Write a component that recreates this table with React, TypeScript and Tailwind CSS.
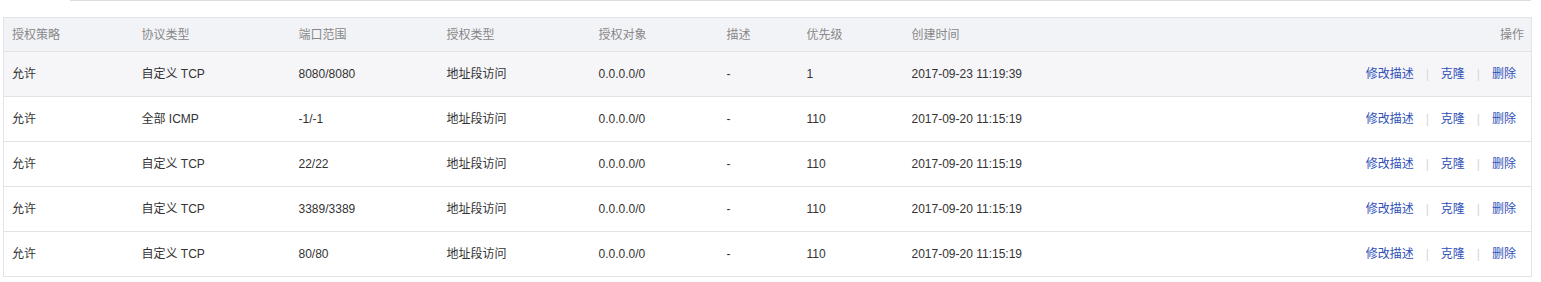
const rows = [
  { policy: "允许", proto: "自定义 TCP", port: "8080/8080", type: "地址段访问", target: "0.0.0.0/0", desc: "-", prio: "1", time: "2017-09-23 11:19:39" },
  { policy: "允许", proto: "全部 ICMP", port: "-1/-1", type: "地址段访问", target: "0.0.0.0/0", desc: "-", prio: "110", time: "2017-09-20 11:15:19" },
  { policy: "允许", proto: "自定义 TCP", port: "22/22", type: "地址段访问", target: "0.0.0.0/0", desc: "-", prio: "110", time: "2017-09-20 11:15:19" },
  { policy: "允许", proto: "自定义 TCP", port: "3389/3389", type: "地址段访问", target: "0.0.0.0/0", desc: "-", prio: "110", time: "2017-09-20 11:15:19" },
  { policy: "允许", proto: "自定义 TCP", port: "80/80", type: "地址段访问", target: "0.0.0.0/0", desc: "-", prio: "110", time: "2017-09-20 11:15:19" },
];

const headers = ["授权策略", "协议类型", "端口范围", "授权类型", "授权对象", "描述", "优先级", "创建时间"];
const widths = ["w-[130px]", "w-[157px]", "w-[148px]", "w-[152px]", "w-[128px]", "w-[80px]", "w-[105px]", "w-[200px]"];

export default function App() {
  return (
    <div className="w-[1541px] h-[282px] bg-white text-[12px] text-[#333]" style={{ fontFamily: '"Liberation Sans", "Noto Sans CJK SC", sans-serif' }}>
      <div className="h-[17px] ml-[70px] mr-[10px] border-t border-[#dddddd]" />
      <table className="ml-[3px] w-[1529px] border border-[#e1e3e9] border-collapse table-fixed">
        <thead>
          <tr className="h-[34px] bg-[#f2f3f7] text-[#888]">
            {headers.map((h, i) => (
              <th key={h} className={`${widths[i]} pl-[8px] text-left font-normal border-b border-[#e1e3e9]`}>{h}</th>
            ))}
            <th className="pr-[7px] text-right font-normal border-b border-[#e1e3e9]">操作</th>
          </tr>
        </thead>
        <tbody>
          {rows.map((r, i) => (
            <tr key={i} className={`h-[45px] border-b border-[#e1e3e9] ${i === 0 ? "bg-[#f6f6f9]" : "bg-white"}`}>
              <td className="pl-[8px]">{r.policy}</td>
              <td className="pl-[8px]">{r.proto}</td>
              <td className="pl-[8px]">{r.port}</td>
              <td className="pl-[8px]">{r.type}</td>
              <td className="pl-[8px]">{r.target}</td>
              <td className="pl-[8px]">{r.desc}</td>
              <td className="pl-[8px]">{r.prio}</td>
              <td className="pl-[8px]">{r.time}</td>
              <td className="pr-[15px] text-right text-[#3050b8]">
                <a className="cursor-pointer">修改描述</a>
                <span className="mx-[12px] text-[#d4d6dc]">|</span>
                <a className="cursor-pointer">克隆</a>
                <span className="mx-[12px] text-[#d4d6dc]">|</span>
                <a className="cursor-pointer">删除</a>
              </td>
            </tr>
          ))}
        </tbody>
      </table>
    </div>
  );
}
